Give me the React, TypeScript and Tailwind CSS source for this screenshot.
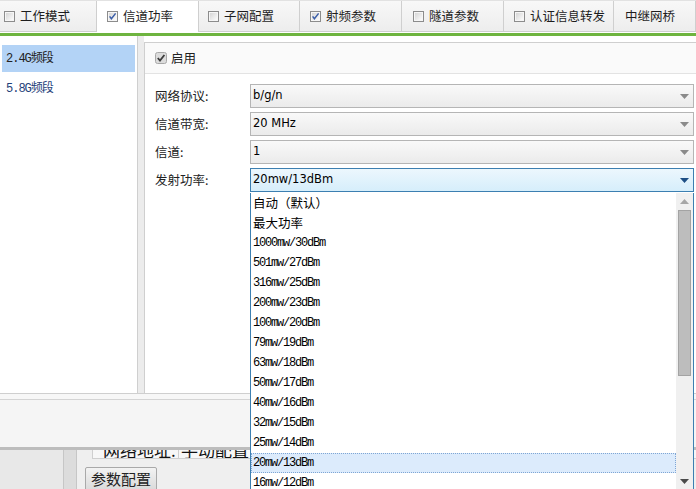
import React from 'react';

type Tab = { label: string; cls: string; box: boolean; checked: boolean; active?: boolean };

const tabs: Tab[] = [
  { label: '工作模式', cls: 'w-[97px] pl-[4px]', box: true, checked: false },
  { label: '信道功率', cls: 'w-[102px] pl-[10px]', box: true, checked: true, active: true },
  { label: '子网配置', cls: 'w-[101px] pl-[9px]', box: true, checked: false },
  { label: '射频参数', cls: 'w-[102px] pl-[10px]', box: true, checked: true },
  { label: '隧道参数', cls: 'w-[102px] pl-[11px]', box: true, checked: false },
  { label: '认证信息转发', cls: 'w-[110px] pl-[10px]', box: true, checked: false },
  { label: '中继网桥', cls: 'flex-1 pl-[11px]', box: false, checked: false },
];

const powers = [
  '自动（默认）',
  '最大功率',
  '1000mw/30dBm',
  '501mw/27dBm',
  '316mw/25dBm',
  '200mw/23dBm',
  '100mw/20dBm',
  '79mw/19dBm',
  '63mw/18dBm',
  '50mw/17dBm',
  '40mw/16dBm',
  '32mw/15dBm',
  '25mw/14dBm',
  '20mw/13dBm',
  '16mw/12dBm',
];

function CheckBox({ checked }: { checked: boolean }) {
  return (
    <svg width="11" height="11" viewBox="0 0 11 11" className="shrink-0">
      <defs>
        <linearGradient id="cbg" x1="0" y1="0" x2="1" y2="1">
          <stop offset="0" stopColor="#d6d6d6" />
          <stop offset="1" stopColor="#fbfbfb" />
        </linearGradient>
      </defs>
      <rect x="0.5" y="0.5" width="10" height="10" fill="#f6f6f6" stroke="#8c8c8c" />
      <rect x="2" y="2" width="7" height="7" fill="url(#cbg)" />
      {checked && (
        <path d="M2.6 5.4 L4.4 7.8 L8.6 2.4" stroke="#3b5ea8" strokeWidth="1.5" fill="none" />
      )}
    </svg>
  );
}

function GrayCheck() {
  return (
    <svg width="12" height="12" viewBox="0 0 12 12" className="shrink-0">
      <rect x="0.5" y="0.5" width="11" height="11" rx="2" fill="#dcdcdc" stroke="#a8a8a8" />
      <path d="M2.8 6 L5 8.6 L9.4 3" stroke="#3c3c3c" strokeWidth="1.8" fill="none" />
    </svg>
  );
}

function Arrow({ color }: { color: string }) {
  return (
    <svg width="9" height="5" viewBox="0 0 9 5">
      <path d="M0 0 H9 L4.5 5 Z" fill={color} />
    </svg>
  );
}

function Select({ value, focused }: { value: string; focused?: boolean }) {
  return (
    <div
      className={
        focused
          ? 'flex h-[24px] flex-1 items-center border border-[#3c7fb1] bg-gradient-to-b from-[#ecf7fd] to-[#d6eefb]'
          : 'flex h-[24px] flex-1 items-center border border-[#b5b5b5] bg-gradient-to-b from-[#f9f9f9] to-[#ebebeb]'
      }
    >
      <span className="flex-1 pl-[2px] font-['DejaVu_Sans',sans-serif] text-[11.5px] text-black">{value}</span>
      <span className="flex h-full w-[17px] items-center justify-center">
        <Arrow color={focused ? '#1d4f85' : '#8a8a8a'} />
      </span>
    </div>
  );
}

function Row({ label, value, focused }: { label: string; value: string; focused?: boolean }) {
  return (
    <div className="flex items-center">
      <span className="w-[95px] text-[12.5px] text-[#222]">{label}</span>
      <Select value={value} focused={focused} />
    </div>
  );
}

export default function App() {
  return (
    <div className="relative h-[489px] w-[696px] overflow-hidden bg-white font-['Noto_Sans_CJK_SC',sans-serif]">
      {/* tab strip */}
      <div className="flex h-[32px] border-t border-[#e2e2e2]">
        {tabs.map((t) => (
          <div
            key={t.label}
            className={
              t.active
                ? `${t.cls} flex items-center gap-[5px] border-r border-[#cfcfcf] bg-white`
                : `${t.cls} flex items-center gap-[5px] border-r border-b border-[#cfcfcf] bg-gradient-to-b from-[#f8f8f8] to-[#ededed]`
            }
          >
            {t.box && <CheckBox checked={t.checked} />}
            <span className="text-[12.5px] text-[#1e1e1e]">{t.label}</span>
          </div>
        ))}
      </div>
      <div className="h-[1px] bg-white" />
      <div className="h-[3px] bg-[#6eb43f]" />

      {/* main body */}
      <div className="flex h-[358px] border-b border-[#cfcfcf]">
        <div className="w-[138px] border-r border-[#cfcfcf] px-[2px] pt-[9px]">
          <div className="flex h-[27px] items-center bg-[#b3d3f6] pl-[4px] font-['Liberation_Mono','Noto_Sans_CJK_SC',monospace] text-[12px] tracking-[-1px] text-[#222]">
            2.4G频段
          </div>
          <div className="mt-[3px] flex h-[27px] items-center pl-[4px] font-['Liberation_Mono','Noto_Sans_CJK_SC',monospace] text-[12px] tracking-[-1px] text-[#1f3f7a]">
            5.8G频段
          </div>
        </div>
        <div className="w-[6px] bg-[#ececec]" />
        <div className="mt-[6px] flex flex-1 flex-col border-l border-t border-[#cfcfcf]">
          <div className="flex h-[31px] items-center gap-[4px] border-b border-[#e3e3e3] bg-[#fafafa] pl-[10px]">
            <GrayCheck />
            <span className="text-[12.5px] text-[#222]">启用</span>
          </div>
          <div className="flex flex-col gap-[4px] pl-[10px] pr-[2px] pt-[10px]">
            <Row label="网络协议:" value="b/g/n" />
            <Row label="信道带宽:" value="20 MHz" />
            <Row label="信道:" value="1" />
            <Row label="发射功率:" value="20mw/13dBm" focused />
          </div>
        </div>
      </div>
      <div className="h-[6px] border-b border-[#d4d4d4] bg-[#f7f7f7]" />
      <div className="h-[47px] bg-[#f5f5f5]" />
      <div className="h-[3px] bg-[#bdbdbd]" />

      {/* window behind */}
      <div className="flex h-[40px]">
        <div className="w-[63px] bg-[#e8e8e8]" />
        <div className="w-[14px] border-x border-[#c6c6c6] bg-[#dcdcdc]" />
        <div className="flex-1 bg-[#efefef]">
          <div className="ml-[15px] flex h-[9px] overflow-hidden border-b border-[#cfcfcf]">
            <div className="w-[86px] border-l border-[#cfcfcf] bg-[#f7f7f7] pl-[10px]">
              <div className="-mt-[10px] text-[17px] leading-[20px] text-[#111]">网络地址:</div>
            </div>
            <div className="flex-1 border-l border-[#cfcfcf] bg-[#f7f7f7] pl-[2px]">
              <div className="-mt-[10px] text-[17px] leading-[20px] text-[#111]">手动配置</div>
            </div>
          </div>
          <div className="ml-[8px] mt-[8px] flex h-[24px] w-[72px] items-center justify-center rounded-[2px] border border-[#a9a9a9] bg-gradient-to-b from-[#f3f3f3] to-[#dadada] text-[15px] text-[#222]">
            参数配置
          </div>
        </div>
      </div>

      {/* open dropdown list */}
      <div className="absolute left-[250px] top-[193px] flex h-[297px] w-[444px] border-x border-[#3c7fb1] bg-white">
        <div className="flex flex-1 flex-col">
          {powers.map((p, i) => (
            <div
              key={p}
              className={
                i === 13
                  ? 'flex h-[20px] shrink-0 items-center border border-dotted border-[#7fa6d4] bg-[#dcebfc] pl-[1px]'
                  : 'flex h-[20px] shrink-0 items-center border border-transparent pl-[1px]'
              }
            >
              {i < 2 ? (
                <span className="text-[12.5px] text-black">{p}</span>
              ) : (
                <span className="font-['Liberation_Mono',monospace] text-[12px] tracking-[-1.2px] text-black">{p}</span>
              )}
            </div>
          ))}
        </div>
        <div className="flex w-[17px] flex-col items-center bg-[#f0f0f0]">
          <div className="flex h-[17px] items-center justify-center">
            <svg width="9" height="5" viewBox="0 0 9 5">
              <path d="M0 5 H9 L4.5 0 Z" fill="#a6a6a6" />
            </svg>
          </div>
          <div className="h-[166px] w-[13px] border border-[#a3a3a3] bg-[#bdbdbd]" />
          <div className="flex-1" />
          <div className="flex h-[17px] items-center justify-center">
            <Arrow color="#4a4a4a" />
          </div>
        </div>
      </div>
    </div>
  );
}
